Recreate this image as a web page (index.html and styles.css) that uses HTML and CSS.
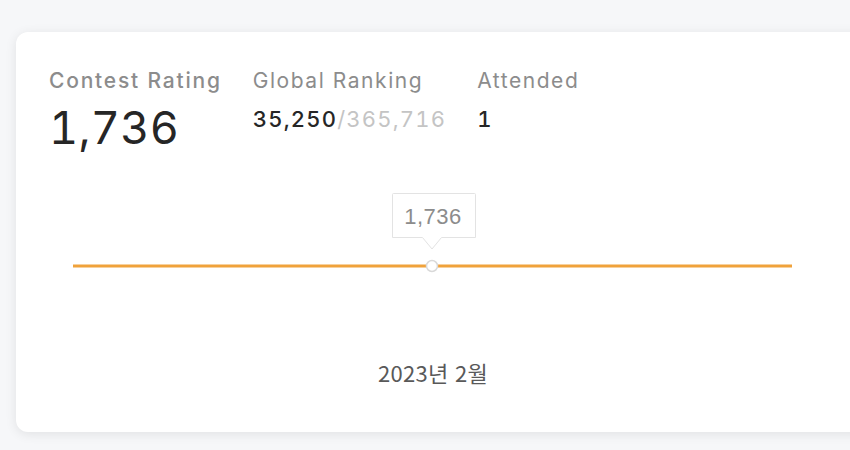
FILE: index.html
```html
<!DOCTYPE html>
<html lang="ko">
<head>
<meta charset="utf-8">
<title>Contest Rating</title>
<link rel="stylesheet" href="styles.css">
</head>
<body>
<div class="card">
  <div class="stats">
    <div class="stat">
      <div class="label label-strong">Contest Rating</div>
      <div class="big">1,736</div>
    </div>
    <div class="stat">
      <div class="label">Global Ranking</div>
      <div class="value">35,250<span class="muted">/365,716</span></div>
    </div>
    <div class="stat">
      <div class="label">Attended</div>
      <div class="value">1</div>
    </div>
  </div>
  <svg class="chart" width="800" height="230" viewBox="0 0 800 230">
    <line x1="25" y1="96" x2="744" y2="96" stroke="#f0a23b" stroke-width="3" stroke-linecap="butt"/>
    <circle cx="384" cy="96" r="5.5" fill="#fff" stroke="#d9d9d9" stroke-width="1.5"/>
    <path d="M345.5 23.5 H426.5 Q427.5 23.5 427.5 24.5 V67.5 H393.5 L384 79 L374.5 67.5 H344.5 V24.5 Q344.5 23.5 345.5 23.5 Z" fill="#fff" stroke="#e3e3e3" stroke-width="1"/>
    <text x="385" y="54" class="tip" text-anchor="middle">1,736</text>
    <text x="385" y="212" class="axis" text-anchor="middle">2023년 2월</text>
  </svg>
</div>
</body>
</html>
```
FILE: styles.css
```css
html, body {
  margin: 0;
  padding: 0;
}
body {
  width: 850px;
  height: 450px;
  overflow: hidden;
  background: #f6f7f9;
  font-family: Inter, "Noto Sans", sans-serif;
}
.card {
  box-sizing: border-box;
  margin: 32px 0 0 16px;
  width: 900px;
  height: 400px;
  background: #fff;
  border-radius: 12px;
  box-shadow: 0 2px 12px rgba(0, 0, 0, 0.09);
  padding: 35px 32px 0 32px;
}
.stats {
  display: flex;
  gap: 31px;
  align-items: flex-start;
  padding-left: 1px;
}
.stat {
  display: flex;
  flex-direction: column;
  gap: 9px;
}
.label {
  font-size: 21px;
  line-height: 28px;
  color: #8c8c8c;
  font-weight: 400;
  letter-spacing: 1.55px;
}
.label-strong {
  font-weight: 500;
  letter-spacing: 1.8px;
}
.big {
  font-size: 45px;
  line-height: 48px;
  color: #262626;
  font-weight: 400;
  font-feature-settings: "tnum";
  letter-spacing: 0.3px;
}
.value {
  font-size: 22px;
  line-height: 28px;
  color: #262626;
  font-weight: 500;
  font-feature-settings: "tnum";
  letter-spacing: 1.2px;
  margin-top: 1px;
}
.muted {
  color: #c4c4c4;
  font-weight: 400;
}
.chart {
  display: block;
  margin-top: 18px;
}
.tip {
  font-family: "Liberation Sans", Arial, sans-serif;
  font-size: 22px;
  fill: #8c8c8c;
  letter-spacing: 0.5px;
}
.axis {
  font-family: "Noto Sans CJK KR", "Noto Sans", sans-serif;
  font-size: 22px;
  fill: #595959;
  letter-spacing: 0.3px;
}
```
